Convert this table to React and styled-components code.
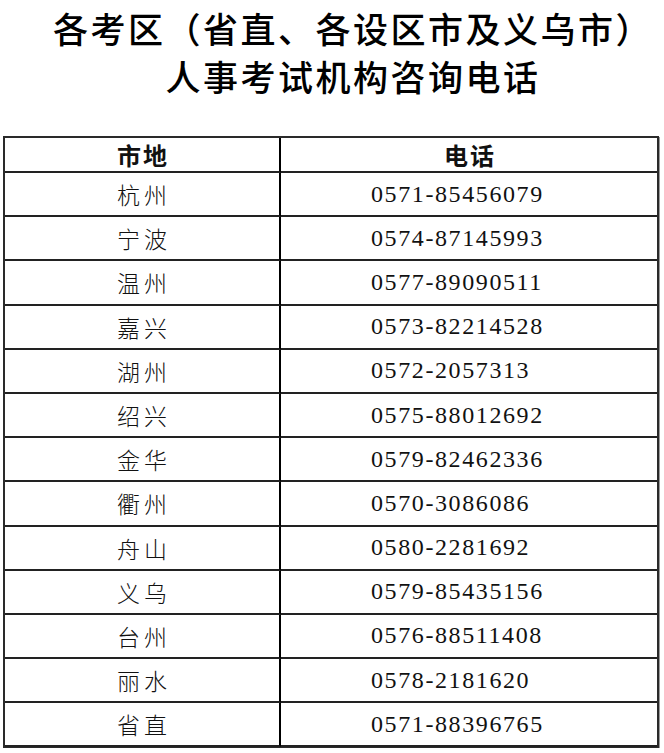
import React from 'react';
import styled, { createGlobalStyle } from 'styled-components';

const GlobalStyle = createGlobalStyle`
  body {
    margin: 0;
    background: #ffffff;
  }
`;

const Page = styled.div`
  width: 664px;
  padding: 4px 5px 0 3px;
  box-sizing: border-box;
`;

const Title = styled.h1`
  margin: 0 0 36px;
  padding-left: 44px;
  text-align: center;
  font-family: "Noto Sans CJK SC", sans-serif;
  font-weight: 500;
  font-size: 35px;
  line-height: 48px;
  letter-spacing: 2.5px;
  color: #000;
`;

const Table = styled.div`
  display: grid;
  grid-template-columns: 276px 1fr;
  border: 2px solid #2a2a2a;
  border-bottom-width: 1px;
  box-shadow: 1px 1px 0 #9a9a9a;
`;

const Cell = styled.div`
  display: flex;
  align-items: center;
  justify-content: ${p => (p.$left ? 'flex-start' : 'center')};
  padding-left: ${p => (p.$left ? '90px' : '0')};
  height: ${p => (p.$head ? '33px' : '42.2px')};
  border-bottom: 2px solid #222;
  border-right: ${p => (p.$first ? '2px solid #000' : 'none')};
  color: #111;
`;

const HeadText = styled.span`
  font-family: "Noto Sans CJK SC", sans-serif;
  font-weight: 700;
  font-size: 24px;
  letter-spacing: 2px;
  padding-left: 2px;
`;

const CityText = styled.span`
  font-family: "Noto Sans CJK SC", sans-serif;
  font-weight: 300;
  font-size: 23px;
  letter-spacing: 4px;
  padding-left: 4px;
`;

const PhoneText = styled.span`
  font-family: "Liberation Serif", serif;
  font-size: 24px;
  letter-spacing: 1.6px;
`;

const rows = [
  ['杭州', '0571-85456079'],
  ['宁波', '0574-87145993'],
  ['温州', '0577-89090511'],
  ['嘉兴', '0573-82214528'],
  ['湖州', '0572-2057313'],
  ['绍兴', '0575-88012692'],
  ['金华', '0579-82462336'],
  ['衢州', '0570-3086086'],
  ['舟山', '0580-2281692'],
  ['义乌', '0579-85435156'],
  ['台州', '0576-88511408'],
  ['丽水', '0578-2181620'],
  ['省直', '0571-88396765'],
];

export default function App() {
  return (
    <>
      <GlobalStyle />
      <Page>
        <Title>
          各考区（省直、各设区市及义乌市）
          <br />
          人事考试机构咨询电话
        </Title>
        <Table>
          <Cell $head $first><HeadText>市地</HeadText></Cell>
          <Cell $head><HeadText>电话</HeadText></Cell>
          {rows.map(([city, phone]) => (
            <React.Fragment key={city}>
              <Cell $first><CityText>{city}</CityText></Cell>
              <Cell $left><PhoneText>{phone}</PhoneText></Cell>
            </React.Fragment>
          ))}
        </Table>
      </Page>
    </>
  );
}
